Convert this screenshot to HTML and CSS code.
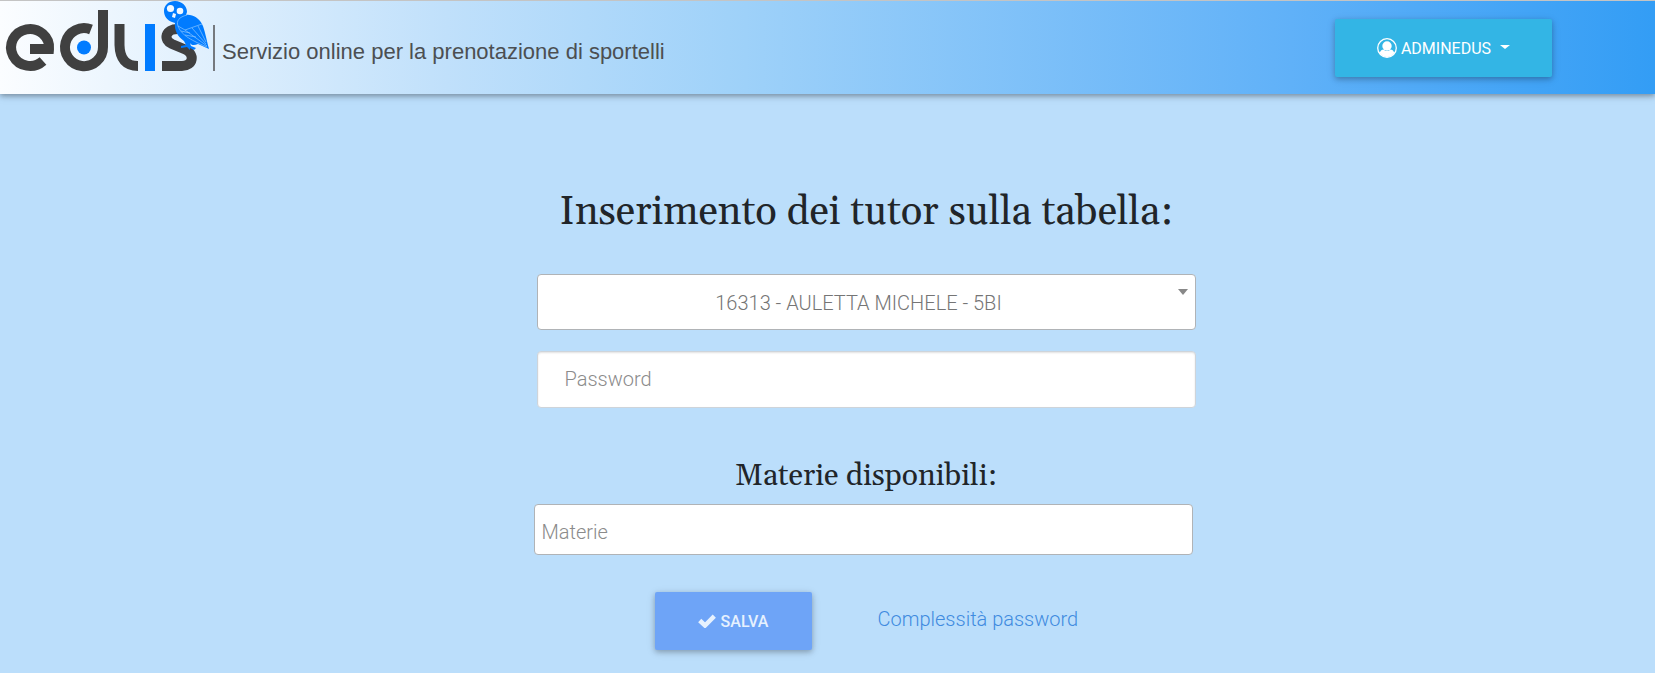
FILE: index.html
```html
<!DOCTYPE html>
<html lang="it">
<head>
<meta charset="utf-8">
<meta name="viewport" content="width=device-width, initial-scale=1">
<title>Edus - Inserimento tutor</title>
<link rel="stylesheet" href="styles.css">
</head>
<body>
<header class="topbar">
  <div class="brand">
    <svg class="logo" viewBox="0 0 210 76" role="img" aria-label="edus">
      <g fill="none" stroke="#404040" stroke-width="10">
        <path d="M30 48H49A19 18.500 0 1 0 43 60"/>
        <path d="M91 28.500A19 19 0 1 0 103 46V9"/>
        <path d="M119.500 23V44Q120 65 138 65"/>
        <path d="M184 28H178C165 28 163 39 172 43L184 48C196 53 193 65 182 65H162"/>
      </g>
      <circle cx="84" cy="46.500" r="7" fill="#007bff"/>
      <path fill="#007bff" d="M145 23h10v47h-10z"/>
      <path fill="#007bff" d="M175 0C182 0 187 5 187 11L186 14C192 13 199 17 202 23C205 29 206 37 209 48L198 43C194 45 191 44 190 42L191 45 196 47 194 49 190 47 190 49 187 46 181 47 181 45 186 44 184 40C178 36 174 29 175 22L172 21C167 19 164 15 164 10C164 4 169 0 175 0z"/>
      <g fill="#f1f8ff">
        <circle cx="170.500" cy="7.500" r="3.600"/>
        <circle cx="180" cy="10" r="3.300"/>
        <path d="M173 12l3 1-1 4-3-1z"/>
      </g>
      <path fill="none" stroke="#8bc5ff" stroke-width=".7" d="M187 14C179 16 176 20 178 25L185 29 202 23M178 25C181 33 188 38 207 46M185 29L207 45M192 27L206 43M198 25L206 41M181 30L190 32M185 34L196 36"/>
    </svg>
    <p class="tagline">Servizio online per la prenotazione di sportelli</p>
  </div>
  <button class="btn btn-user" type="button" aria-haspopup="true">
    <svg class="icon-user" viewBox="0 0 20 20" aria-hidden="true">
      <circle cx="10" cy="10" r="9.300" fill="none" stroke="#fff" stroke-width="1.300"/>
      <circle cx="10" cy="8" r="4.700" fill="#fff"/>
      <path fill="#fff" d="M2.500 15C3.500 12.500 5 11.500 6.500 11.500Q10 14.500 13.500 11.500C15 11.500 16.500 12.500 17.500 15Q14 19 10 19T2.500 15z"/>
    </svg>
    <span>ADMINEDUS</span>
    <span class="caret"></span>
  </button>
</header>
<main class="page">
  <form class="tutor-form">
    <h1 class="title">Inserimento dei tutor sulla tabella:</h1>
    <div class="select-wrap">
      <select class="field select" aria-label="Studente">
        <option>16313 - AULETTA MICHELE - 5BI</option>
      </select>
      <span class="select-arrow"></span>
    </div>
    <input class="field password" type="password" placeholder="Password" aria-label="Password">
    <label class="subtitle" for="materie">Materie disponibili:</label>
    <input class="field subjects" id="materie" type="text" placeholder="Materie">
    <div class="actions">
      <button class="btn btn-save" type="button">
        <svg class="icon-check" viewBox="0 0 18 14" aria-hidden="true">
          <path fill="none" stroke="currentColor" stroke-width="4.500" d="M1.700 6.500L7 11.500 16.300 2.200"/>
        </svg>
        <span>SALVA</span>
      </button>
      <a class="link" href="#">Complessità password</a>
    </div>
  </form>
</main>
</body>
</html>
```
FILE: styles.css
```css
* { box-sizing: border-box; }

body {
  margin: 0;
  min-height: 100vh;
  background: #bbdefb;
  font-family: Roboto, "Liberation Sans", sans-serif;
  font-weight: 300;
  font-size: 20px;
  color: #212529;
}

.topbar {
  display: flex;
  align-items: flex-start;
  justify-content: space-between;
  min-height: 94px;
  padding-right: 103px;
  border-top: 1px solid #c4c4c4;
  background: linear-gradient(to right, #fbfdff 0%, #c0e0fb 27%, #a0d2f9 44%, #60b1f8 78%, #339df5 100%);
  box-shadow: 0 2px 5px rgba(0, 0, 0, .3), 0 2px 10px rgba(0, 0, 0, .1);
}

.brand { display: flex; align-items: flex-start; }

.logo { width: 210px; height: 76px; }

.tagline {
  margin: 24px 0 0 3px;
  padding: 8px 0 0 7px;
  border-left: 2px solid #75797e;
  font-family: "Liberation Sans", Arial, sans-serif;
  font-weight: 400;
  font-size: 22px;
  line-height: 38px;
  color: #4c4f52;
  white-space: nowrap;
}

.btn {
  display: flex;
  align-items: center;
  justify-content: center;
  height: 58px;
  border: 0;
  border-radius: 2px;
  font-family: inherit;
  font-weight: 400;
  font-size: 16px;
  color: #fff;
  box-shadow: 0 2px 5px rgba(0, 0, 0, .2), 0 2px 10px rgba(0, 0, 0, .14);
}

.btn-user {
  gap: 4px;
  width: 217px;
  margin-top: 18px;
  background: #33b5e5;
}

.icon-user { width: 20px; height: 20px; }

.caret {
  margin: 0 0 2px 5px;
  border: 5px solid transparent;
  border-top: 4px solid #fff;
  border-bottom: 0;
}

.page {
  display: flex;
  justify-content: center;
  padding: 95px 0 23px 77px;
}

.tutor-form {
  display: flex;
  flex-direction: column;
  width: 659px;
}

.title, .subtitle {
  font-family: Gelasio, Georgia, "Liberation Serif", serif;
  font-weight: 400;
  text-align: center;
}

.title { margin: 0 0 37px; font-size: 40px; line-height: 48px; }

.subtitle { margin-top: 50px; font-size: 30px; line-height: 36px; }

.field {
  width: 100%;
  border: 1px solid #b0b3b6;
  border-radius: 4px;
  background: #fff;
  font: inherit;
  color: #757575;
}

.field::placeholder { color: #8b8b8b; opacity: 1; }

.select-wrap { position: relative; }

.select {
  display: block;
  height: 56px;
  padding: 2px 15px 0 0;
  appearance: none;
  text-align-last: center;
}

.select-arrow {
  position: absolute;
  top: 15px;
  right: 8px;
  border: 5px solid transparent;
  border-top: 6px solid #888;
  border-bottom: 0;
  pointer-events: none;
}

.password {
  height: 57px;
  margin-top: 21px;
  padding: 0 27px 2px;
  border-color: #ced4da;
  box-shadow: inset 0 1px 2px rgba(0, 0, 0, .12);
}

.subjects {
  height: 51px;
  margin: 10px 0 0 -3px;
  padding: 4px 7px 0;
}

.actions {
  display: flex;
  align-items: center;
  gap: 66px;
  margin-top: 37px;
  padding-left: 118px;
}

.btn-save {
  gap: 5px;
  width: 157px;
  background: #6ea4f7;
  font-weight: 500;
  color: #e6f1fe;
}

.icon-check { width: 18px; height: 14px; }

.link { padding-bottom: 4px; color: #3f8be0; text-decoration: none; }
```
